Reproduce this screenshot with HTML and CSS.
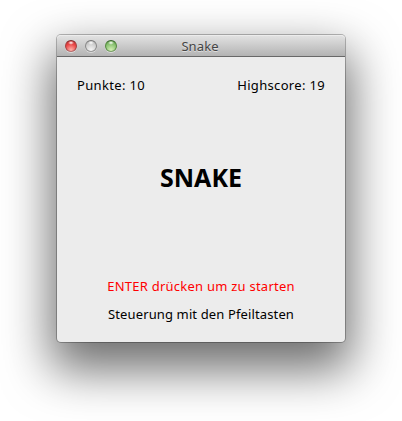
FILE: index.html
```html
<!DOCTYPE html>
<html lang="de">
<head>
<meta charset="utf-8">
<title>Snake</title>
<link rel="stylesheet" href="styles.css">
</head>
<body>
<main class="window">
  <header class="titlebar">
    <div class="controls">
      <span class="light close"></span>
      <span class="light minimize"></span>
      <span class="light zoom"></span>
    </div>
    <span class="title">Snake</span>
  </header>
  <section class="game">
    <div class="scores">
      <span class="points">Punkte: 10</span>
      <span class="highscore">Highscore: 19</span>
    </div>
    <h1 class="name">SNAKE</h1>
    <p class="start">ENTER drücken um zu starten</p>
    <p class="help">Steuerung mit den Pfeiltasten</p>
  </section>
</main>
</body>
</html>
```
FILE: styles.css
```css
* { box-sizing: border-box; }

body {
  margin: 0;
  height: 421px;
  padding: 35px 57px 0;
  overflow: hidden;
  background: #fff;
  color: #000;
  font-family: "Noto Sans", sans-serif;
  font-size: 13px;
  line-height: 18px;
  white-space: nowrap;
}

.window {
  width: 288px;
  height: 307px;
  border-radius: 4px;
  background: #ececec;
  box-shadow: 0 0 0 1px rgba(0, 0, 0, 0.26), 0 22px 48px 6px rgba(0, 0, 0, 0.57);
}

.titlebar {
  display: grid;
  grid-template-columns: 64px 1fr 64px;
  align-items: center;
  height: 22px;
  padding: 0 8px;
  border-top: 1px solid #ececec;
  border-bottom: 1px solid #686868;
  border-radius: 4px 4px 0 0;
  background: linear-gradient(#e1e1e1, #b3b3b3);
}

.controls {
  display: flex;
  gap: 8px;
}

.light {
  width: 12px;
  height: 12px;
  border: 1px solid;
  border-radius: 50%;
  box-shadow: 0 1px 0 rgba(255, 255, 255, 0.45);
}

.close {
  border-color: #7e2727 #a44040 #b76b6b;
  background: radial-gradient(ellipse 3px 2px at 50% 18%, #fff, transparent),
    radial-gradient(circle at 50% 90%, #ffb3aa, #e94444 60%, #b82e2e);
}

.minimize {
  border-color: #777 #898989 #999;
  background: radial-gradient(ellipse 3px 2px at 50% 18%, #fff, transparent),
    radial-gradient(circle at 50% 90%, #f5f5f5, #cfcfcf 60%, #aaa);
}

.zoom {
  border-color: #36642b #55893f #789f65;
  background: radial-gradient(ellipse 3px 2px at 50% 18%, #fff, transparent),
    radial-gradient(circle at 50% 90%, #d4f0b5, #8ac272 60%, #58943f);
}

.title {
  margin-left: -2px;
  color: #454545;
  letter-spacing: 0.1px;
  text-align: center;
  text-shadow: 0 1px 0 rgba(255, 255, 255, 0.5);
}

.game {
  display: flex;
  flex-direction: column;
  align-items: center;
  height: 285px;
  padding: 19px 20px 0;
}

.scores {
  display: flex;
  justify-content: space-between;
  align-self: stretch;
  letter-spacing: 0.33px;
}

.name {
  margin: 65px 0 0;
  font-size: 25px;
  line-height: 36px;
}

.start,
.help {
  margin: 0;
}

.start {
  margin-top: 82px;
  color: #f00;
  letter-spacing: 0.24px;
}

.help {
  margin-top: 10px;
  letter-spacing: 0.13px;
}
```
